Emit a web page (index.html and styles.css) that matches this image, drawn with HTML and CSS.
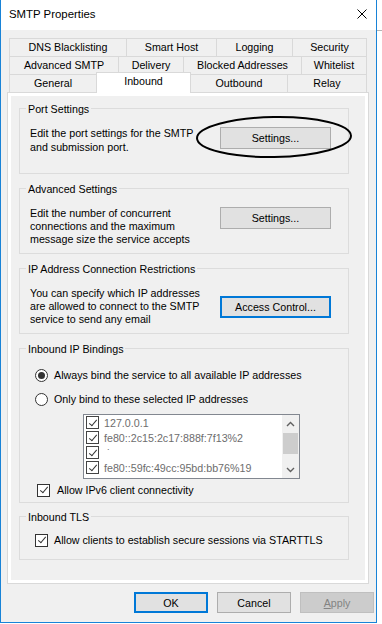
FILE: index.html
```html
<!DOCTYPE html>
<html>
<head>
  <title>SMTP Properties</title>
  <link rel="stylesheet" href="styles.css">
</head>
<body>
  <div class="window">
    <div class="titlebar">
      <span class="title">SMTP Properties</span>
      <svg class="close" width="10" height="10" viewBox="0 0 10 10">
        <path d="M0.5 0.5 L9.5 9.5 M9.5 0.5 L0.5 9.5" stroke="#000" stroke-width="1" fill="none"/>
      </svg>
    </div>

    <div class="tabs">
      <div class="tab-row row-1">
        <div class="tab">DNS Blacklisting</div>
        <div class="tab">Smart Host</div>
        <div class="tab">Logging</div>
        <div class="tab">Security</div>
      </div>
      <div class="tab-row row-2">
        <div class="tab">Advanced SMTP</div>
        <div class="tab">Delivery</div>
        <div class="tab">Blocked Addresses</div>
        <div class="tab">Whitelist</div>
      </div>
      <div class="tab-row row-3">
        <div class="tab">General</div>
        <div class="tab selected">Inbound</div>
        <div class="tab">Outbound</div>
        <div class="tab">Relay</div>
      </div>
    </div>

    <div class="panel">
      <div class="page">

        <div class="group group-port">
          <div class="group-title">Port Settings</div>
          <div class="group-body">
            <div class="desc desc-2">Edit the port settings for the SMTP<br>and submission port.</div>
            <button class="btn btn-side btn-port">Settings...</button>
          </div>
          <svg class="ring" width="160" height="45" viewBox="0 0 160 45">
            <ellipse cx="80" cy="22" rx="77" ry="20" transform="rotate(-1 80 22)" fill="none" stroke="#000" stroke-width="2"/>
          </svg>
        </div>

        <div class="group">
          <div class="group-title">Advanced Settings</div>
          <div class="group-body">
            <div class="desc">Edit the number of concurrent<br>connections and the maximum<br>message size the service accepts</div>
            <button class="btn btn-side">Settings...</button>
          </div>
        </div>

        <div class="group">
          <div class="group-title">IP Address Connection Restrictions</div>
          <div class="group-body">
            <div class="desc">You can specify which IP addresses<br>are allowed to connect to the SMTP<br>service to send any email</div>
            <button class="btn btn-side btn-focus btn-access">Access Control...</button>
          </div>
        </div>

        <div class="group group-bind">
          <div class="group-title">Inbound IP Bindings</div>
          <div class="option option-first">
            <span class="radio checked"></span>
            <span>Always bind the service to all available IP addresses</span>
          </div>
          <div class="option option-second">
            <span class="radio"></span>
            <span>Only bind to these selected IP addresses</span>
          </div>
          <div class="listbox">
            <div class="list-items">
              <div class="list-item"><span class="check small"></span><span>127.0.0.1</span></div>
              <div class="list-item"><span class="check small"></span><span>fe80::2c15:2c17:888f:7f13%2</span></div>
              <div class="list-item"><span class="check small"></span><span class="stray">˙</span></div>
              <div class="list-item"><span class="check small"></span><span>fe80::59fc:49cc:95bd:bb76%19</span></div>
            </div>
            <div class="scrollbar">
              <div class="arrow">
                <svg width="9" height="6" viewBox="0 0 9 6"><path d="M1 5 L4.5 1.5 L8 5" fill="none" stroke="#606060" stroke-width="1.4"/></svg>
              </div>
              <div class="thumb"></div>
              <div class="arrow arrow-down">
                <svg width="9" height="6" viewBox="0 0 9 6"><path d="M1 1 L4.5 4.5 L8 1" fill="none" stroke="#606060" stroke-width="1.4"/></svg>
              </div>
            </div>
          </div>
          <div class="option option-ipv6">
            <span class="check"></span>
            <span>Allow IPv6 client connectivity</span>
          </div>
        </div>

        <div class="group group-tls">
          <div class="group-title">Inbound TLS</div>
          <div class="option option-tls">
            <span class="check"></span>
            <span>Allow clients to establish secure sessions via STARTTLS</span>
          </div>
        </div>

      </div>
    </div>

    <div class="footer">
      <button class="btn btn-foot btn-focus">OK</button>
      <button class="btn btn-foot">Cancel</button>
      <button class="btn btn-foot btn-disabled"><u>A</u>pply</button>
    </div>
  </div>
  <div class="side"></div>
</body>
</html>
```
FILE: styles.css
```css
body {
  margin: 0;
  width: 382px;
  height: 624px;
  display: flex;
  background-color: #fff;
  font-family: "Liberation Sans", Arial, sans-serif;
  font-size: 10.7px;
  color: #000;
  overflow: hidden;
}

.window {
  width: 377px;
  height: 623px;
  box-sizing: border-box;
  border: 1px solid #1883d7;
  border-top: none;
  background-color: #f0f0f0;
}

.side {
  width: 5px;
  margin-top: 30px;
  height: 1px;
  background-color: #b4b4b4;
}

/* title bar */
.titlebar {
  height: 30px;
  background-color: #fff;
  display: flex;
  align-items: flex-start;
  justify-content: space-between;
  padding: 0 9px 0 8px;
}

.title {
  font-size: 11.4px;
  line-height: 15px;
  margin-top: 7px;
}

.close {
  margin-top: 9px;
}

/* tabs */
.tabs {
  margin: 8px 0 0 8px;
  width: 358px;
}

.tab-row {
  display: grid;
  height: 18px;
}

.row-1 { grid-template-columns: 117px 90px 76px 75px; }
.row-2 { grid-template-columns: 109px 65px 118px 66px; }
.row-3 { grid-template-columns: 87px 94px 97px 80px; }

.tab {
  border-top: 1px solid #d9d9d9;
  border-left: 1px solid #d9d9d9;
  line-height: 17px;
  text-align: center;
  white-space: nowrap;
}

.tab:last-child {
  border-right: 1px solid #d9d9d9;
}

.tab.selected {
  position: relative;
  z-index: 1;
  height: 20px;
  margin: -2px -1px 0 0;
  border-right: 1px solid #d9d9d9;
  background-color: #fff;
  line-height: 17px;
}

/* tab page */
.panel {
  margin-left: 6px;
  width: 362px;
  box-sizing: border-box;
  border: 1px solid #d9d9d9;
  background-color: #fff;
  padding: 3px;
}

.page {
  height: 484px;
  box-sizing: border-box;
  background-color: #f0f0f0;
  padding: 12px 0 0 8px;
}

.group {
  position: relative;
  width: 330px;
  height: 66px;
  box-sizing: border-box;
  border: 1px solid #dcdcdc;
  margin-bottom: 14px;
}

.group-bind {
  height: 155px;
  margin-bottom: 13px;
}

.group-tls {
  height: 44px;
}

.group-title {
  width: fit-content;
  margin: -7px 0 0 6px;
  padding: 0 2px;
  line-height: 15px;
  background-color: #f0f0f0;
}

.group-body {
  display: flex;
  align-items: flex-start;
  padding-left: 10px;
  margin-top: 10px;
}

.desc {
  width: 190px;
  line-height: 13px;
  white-space: nowrap;
}

.desc-2 {
  line-height: 14px;
}

.group-port .group-body {
  margin-top: 9px;
}

.ring {
  position: absolute;
  left: 174px;
  top: 6px;
}

/* buttons */
.btn {
  font-family: inherit;
  font-size: inherit;
  color: #000;
  background-color: #e1e1e1;
  border: 1px solid #adadad;
  padding: 0;
  margin: 0;
}

.btn-side {
  width: 111px;
  height: 22px;
}

.btn-port {
  margin-top: 1px;
}

.btn-access {
  margin-top: 9px;
  height: 22px;
}

.btn-focus {
  border: 2px solid #0078d7;
}

/* radio and check options */
.option {
  display: flex;
  align-items: center;
  height: 16px;
  padding-left: 15px;
  gap: 6px;
  white-space: nowrap;
}

.option-first { margin-top: 10px; }
.option-second { margin-top: 8px; }
.option-ipv6 { margin-top: 3px; padding-left: 17px; gap: 7px; }
.option-tls { margin-top: 7px; }

.radio {
  width: 13px;
  height: 13px;
  box-sizing: border-box;
  border: 1px solid #333;
  border-radius: 50%;
  background-color: #fff;
  display: flex;
  align-items: center;
  justify-content: center;
}

.radio.checked::after {
  content: "";
  width: 7px;
  height: 7px;
  border-radius: 50%;
  background-color: #333;
}

.check {
  width: 13px;
  height: 13px;
  box-sizing: border-box;
  border: 1px solid #333;
  background-color: #fff;
  position: relative;
}

.check::after {
  content: "";
  position: absolute;
  left: 3.5px;
  top: 0.5px;
  width: 3px;
  height: 7px;
  border: solid #333;
  border-width: 0 1.2px 1.2px 0;
  transform: rotate(40deg);
}

/* list of addresses */
.listbox {
  display: flex;
  width: 217px;
  height: 65px;
  box-sizing: border-box;
  margin: 7px 0 0 63px;
  border: 1px solid #828790;
  background-color: #fff;
}

.list-items {
  flex: 1;
  color: #6d6d6d;
}

.list-item {
  display: flex;
  align-items: center;
  height: 15px;
  padding-left: 2px;
  gap: 5px;
  white-space: nowrap;
}

.stray {
  margin-left: 3px;
}

.check.small {
  border-color: #444;
}

.scrollbar {
  width: 17px;
  background-color: #f0f0f0;
  display: flex;
  flex-direction: column;
}

.arrow {
  height: 17px;
  display: flex;
  align-items: center;
  justify-content: center;
}

.arrow-down {
  margin-top: auto;
}

.thumb {
  height: 21px;
  margin: 1px 1px 0;
  background-color: #cdcdcd;
}

/* dialog buttons */
.footer {
  display: flex;
  justify-content: flex-end;
  gap: 9px;
  padding: 8px 2px 0 0;
}

.btn-foot {
  width: 74px;
  height: 21px;
}

.btn-disabled {
  background-color: #cccccc;
  border-color: #bfbfbf;
  color: #838383;
}
```
